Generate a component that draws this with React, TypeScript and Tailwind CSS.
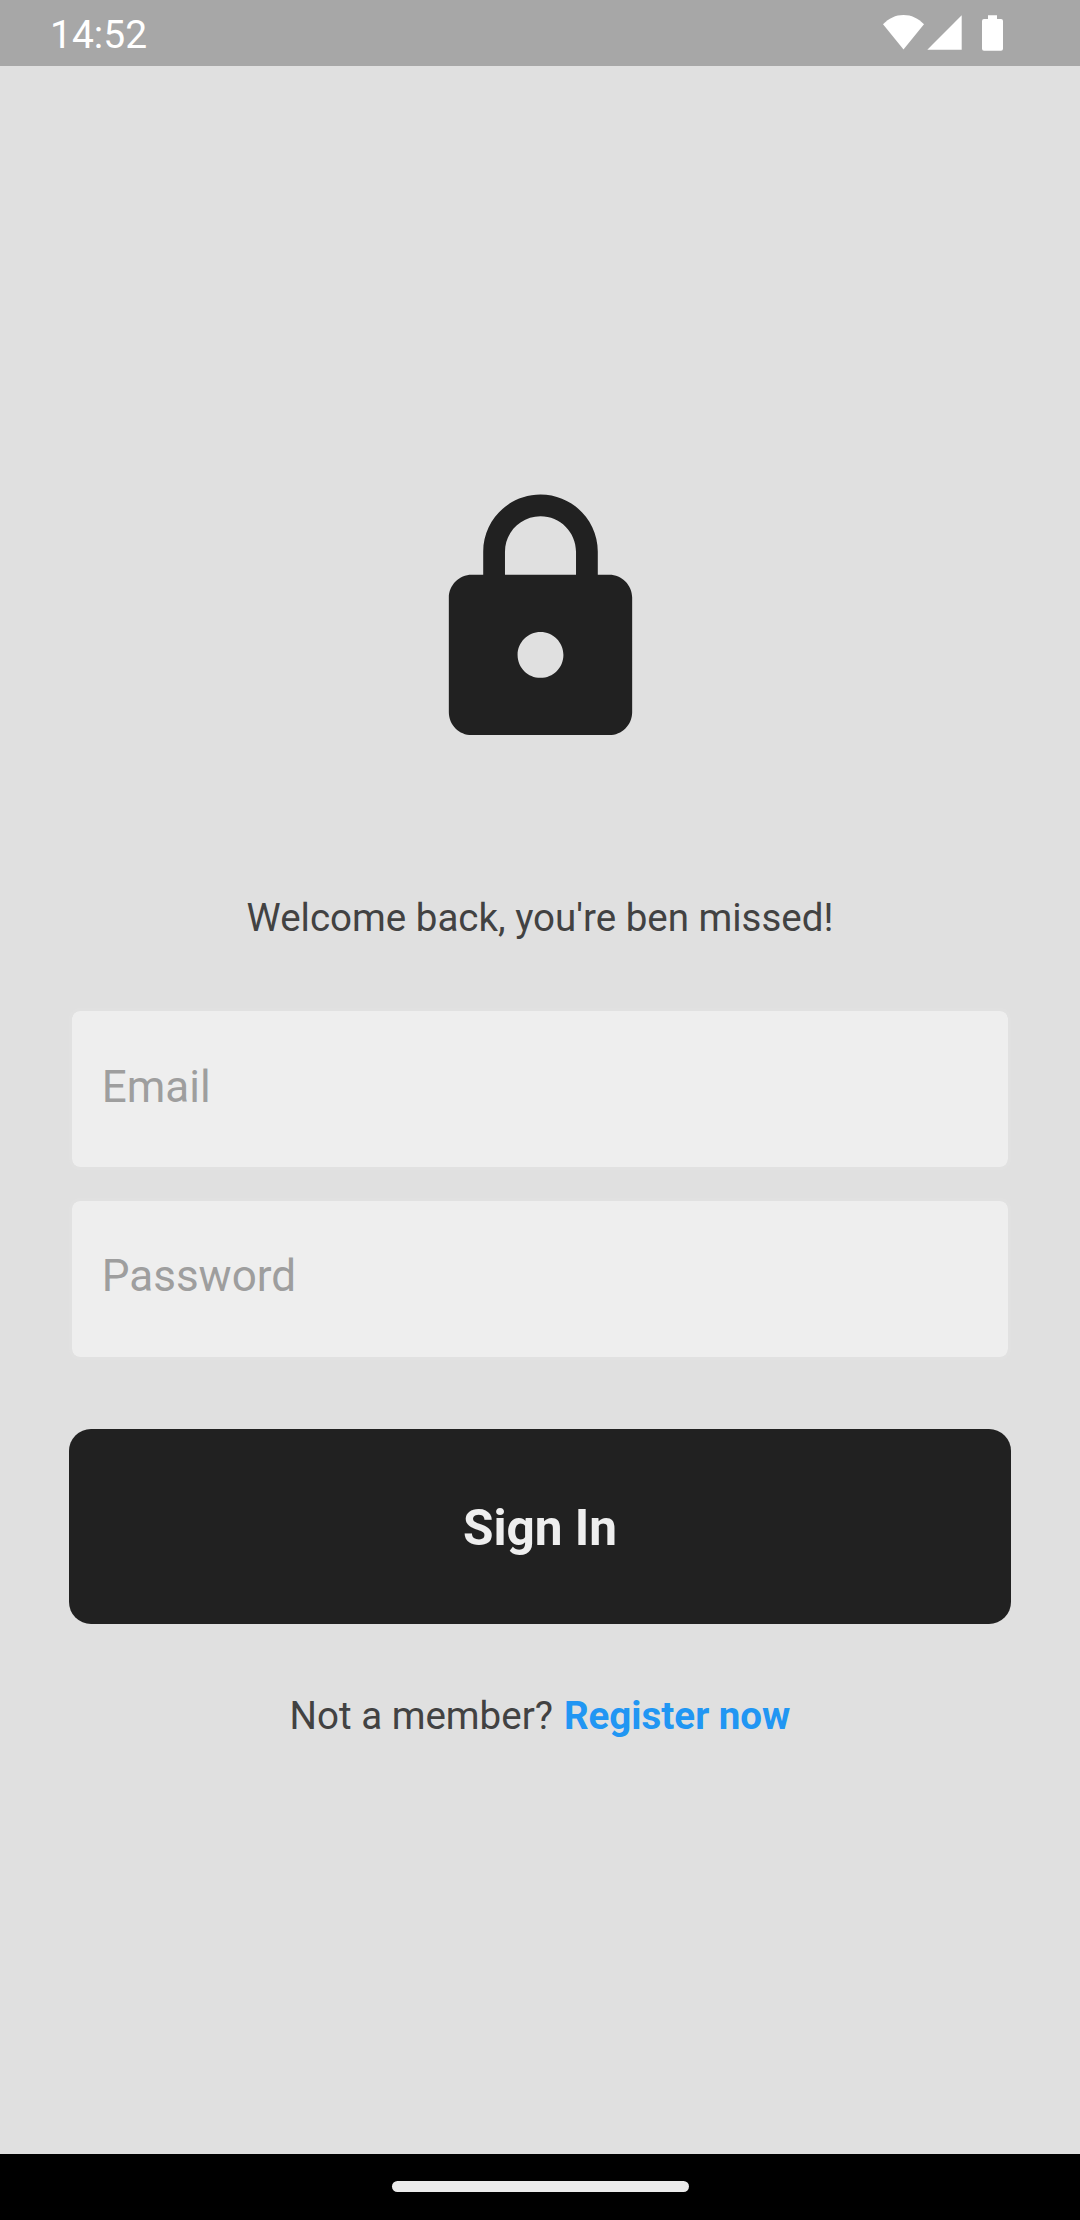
import { MdLock } from 'react-icons/md';

function StatusBar() {
  return (
    <header className="flex h-[66px] shrink-0 justify-between bg-[#a7a7a7] pl-[50px] pr-[77px] text-white">
      <span className="pt-[12px] text-[39px] leading-[46px]">14:52</span>
      <div className="flex items-start pt-[15px]">
        <svg className="h-[35px] w-[41px]" viewBox="0 0 41 35" fill="currentColor">
          <path d="M0 9.3C5.800 3.300 12.600 0 20.500 0S35.200 3.300 41 9.300L20.500 34.500Z" />
        </svg>
        <svg className="ml-[3px] h-[35px] w-[35px]" viewBox="0 0 35 35" fill="currentColor">
          <path d="M34.700 0.300V34.700H0.300Z" />
        </svg>
        <svg className="ml-[20px] h-[36px] w-[21px]" viewBox="0 0 21 36" fill="currentColor">
          <path d="M6 0.200H15V4H19Q21 4 21 6V33.700Q21 35.800 19 35.800H2Q0 35.800 0 33.700V6Q0 4 2 4H6Z" />
        </svg>
      </div>
    </header>
  );
}

function Field({ label, type }: { label: string; type: string }) {
  return (
    <input
      type={type}
      placeholder={label}
      className="block h-[162.250px] w-full rounded-[11px] border-[3px] border-[#e1e1e1] bg-[#eeeeee] bg-clip-padding px-[30px] pb-[5px] text-[44px] text-[#212121] outline-none placeholder:text-[#9e9e9e]"
    />
  );
}

export default function App() {
  return (
    <div className="flex h-[2220px] w-[1080px] flex-col bg-[#e0e0e0] font-['Roboto',sans-serif]">
      <StatusBar />
      <main className="flex flex-1 flex-col items-center px-[68.750px] pt-[416.800px]">
        <MdLock className="h-[275px] w-[275px] shrink-0 text-[#212121]" />
        <p className="mt-[137px] h-[45px] whitespace-nowrap text-[38.500px] leading-[45px] text-[#424242]">
          Welcome back, you're ben missed!
        </p>
        <form className="mt-[68.200px] flex w-full flex-col">
          <div className="flex flex-col gap-[27.500px]">
            <Field label="Email" type="email" />
            <Field label="Password" type="password" />
          </div>
          <button
            type="button"
            className="mt-[69px] h-[194.800px] w-full rounded-[22px] bg-[#212121] pt-[3px] text-[49.500px] font-bold text-[#eeeeee]"
          >
            Sign In
          </button>
        </form>
        <div className="mt-[69px] flex gap-[11px] whitespace-nowrap text-[38.500px] leading-[45px]">
          <span className="text-[#424242]">Not a member?</span>
          <a className="font-bold text-[#2196f3]">Register now</a>
        </div>
      </main>
      <footer className="flex h-[66px] shrink-0 justify-center bg-black pt-[27.300px]">
        <div className="h-[11px] w-[297px] rounded-full bg-[#ebebeb]" />
      </footer>
    </div>
  );
}
